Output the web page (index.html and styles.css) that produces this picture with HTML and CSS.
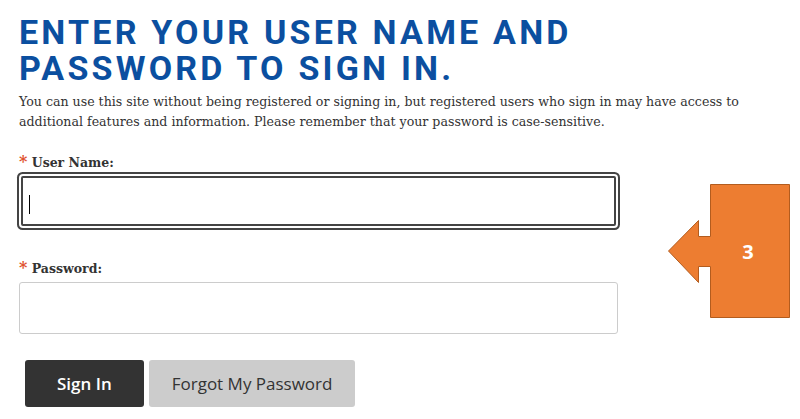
FILE: index.html
```html
<!DOCTYPE html>
<html lang="en">
<head>
    <meta charset="UTF-8">
    <meta name="viewport" content="width=device-width, initial-scale=1.0">
    <title>Sign In</title>
    <link rel="stylesheet" href="styles.css">
</head>
<body>

<div class="container">
    <h1>Enter your user name and password to sign in.</h1>
    <p class="intro">You can use this site without being registered or signing in, but registered users who sign in may have access to additional features and information. Please remember that your password is case-sensitive.</p>

    <form class="login-form">
        <div class="field">
            <label for="username"><span class="req">*</span> User Name:</label>
            <div class="input-wrap">
                <input type="text" id="username" class="text-input focused">
                <span class="caret"></span>
            </div>
        </div>

        <div class="field">
            <label for="password"><span class="req">*</span> Password:</label>
            <div class="input-wrap">
                <input type="password" id="password" class="text-input">
            </div>
        </div>

        <div class="actions">
            <button type="button" class="btn btn-primary">Sign In</button>
            <button type="button" class="btn btn-secondary">Forgot My Password</button>
        </div>
    </form>
</div>

<!-- callout annotation -->
<svg class="callout" width="124" height="136" viewBox="0 0 124 136">
    <polygon points="42.5,0.5 121.5,0.5 121.5,133.5 42.5,133.5 42.5,82.5 30.5,82.5 30.5,98.5 0.5,67 30.5,36.5 30.5,52.5 42.5,52.5"
             fill="#ed7d31" stroke="#b35c1e" stroke-width="1"/>
    <text x="80" y="74.5" text-anchor="middle" class="callout-num">3</text>
</svg>

</body>
</html>
```

FILE: styles.css
```css
body {
    margin: 0;
    background-color: #fff;
    font-family: "DejaVu Serif", serif;
    color: #333;
}

.container {
    padding: 14px 0 0 19px;
    width: 760px;
}

h1 {
    font-family: Roboto, "Liberation Sans", sans-serif;
    font-weight: 700;
    font-size: 34px;
    line-height: 36px;
    letter-spacing: 3.2px;
    text-transform: uppercase;
    color: #0b4fa0;
    max-width: 600px;
    margin: 0;
}

.intro {
    font-size: 12.6px;
    line-height: 20px;
    margin: 6px 0 0 0;
}

.login-form {
    margin-top: 20px;
}

.field + .field {
    margin-top: 32px;
}

.field label {
    display: block;
    font-size: 12.5px;
    font-weight: bold;
    margin-bottom: 5px;
}

.req {
    color: #e0532f;
    font-size: 16px;
}

.input-wrap {
    position: relative;
    width: 599px;
}

.text-input {
    display: block;
    box-sizing: border-box;
    width: 599px;
    height: 52px;
    border: 1px solid #ccc;
    border-radius: 3px;
    padding: 0 10px;
    margin: 0;
    font-size: 16px;
    outline: none;
}

.text-input.focused {
    width: 595px;
    height: 50px;
    margin: 3px 0 3px 2px;
    border: 2px solid #444;
    border-radius: 2px;
    box-shadow: 0 0 0 2px #fff, 0 0 0 4px #444;
}

.caret {
    position: absolute;
    left: 10px;
    top: 19px;
    width: 1px;
    height: 19px;
    background: #000;
}

.actions {
    display: flex;
    gap: 5px;
    margin-left: 6px;
    margin-top: 26px;
}

.btn {
    font-family: "Open Sans", sans-serif;
    font-size: 17px;
    height: 47px;
    border: none;
    border-radius: 3px;
    padding: 0 32px;
    cursor: pointer;
}

.btn-primary {
    background-color: #333;
    color: #fff;
    font-weight: 600;
}

.btn-secondary {
    background-color: #ccc;
    color: #333;
    padding: 0 23px;
}

.callout {
    position: absolute;
    left: 668px;
    top: 184px;
}

.callout-num {
    font-family: "Open Sans", sans-serif;
    font-weight: 700;
    font-size: 20px;
    fill: #fff;
}
```
